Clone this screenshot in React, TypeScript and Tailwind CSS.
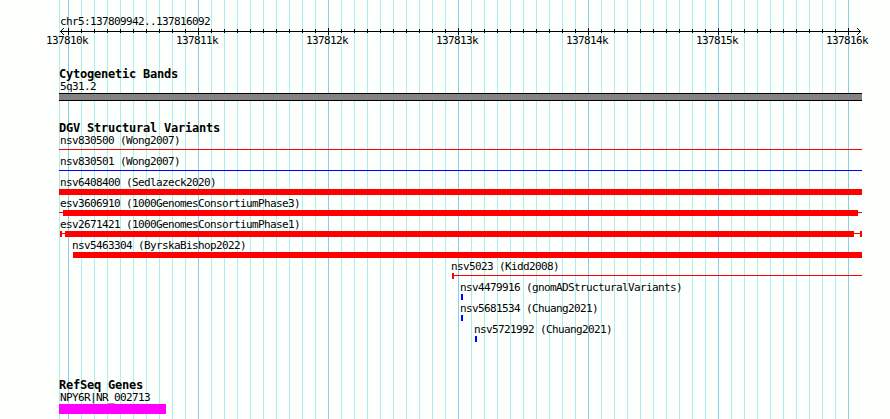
import type { ReactNode } from 'react';

const MAJORS = [68, 198, 328, 458, 588, 718, 848];
const TICKS = Array.from({ length: 61 }, (_, i) => 68 + i * 13);

function Grid() {
  return (
    <svg className="absolute inset-0" width="890" height="419" shapeRendering="crispEdges">
      <rect x="59" y="0" width="1" height="419" fill="#afeeee" />
      {TICKS.map((x) => (
        <rect key={x} x={x} y="0" width="1" height="419" fill={MAJORS.includes(x) ? '#87ceeb' : '#afeeee'} />
      ))}
    </svg>
  );
}

function Axis() {
  return (
    <svg className="-ml-[59px] block" width="890" height="8" shapeRendering="crispEdges">
      <rect x="60" y="3" width="801" height="1" />
      {TICKS.map((x) => {
        const major = MAJORS.includes(x);
        return <rect key={x} x={x} y={major ? 0 : 1} width="1" height={major ? 7 : 4} />;
      })}
      {[1, 2, 3].map((d) => (
        <g key={d}>
          <rect x={60 + d} y={3 - d} width="1" height="1" />
          <rect x={60 + d} y={3 + d} width="1" height="1" />
          <rect x={860 - d} y={3 - d} width="1" height="1" />
          <rect x={860 - d} y={3 + d} width="1" height="1" />
        </g>
      ))}
    </svg>
  );
}

const Heading = ({ children }: { children: ReactNode }) => (
  <h2 className="h-[13px] text-[12px] leading-[13px] font-bold tracking-[-0.224px]">{children}</h2>
);

const Label = ({ children }: { children: ReactNode }) => (
  <div className="h-[13px] pl-px leading-[13px]">{children}</div>
);

const Red = ({ w }: { w: string }) => <span className={`h-[6px] bg-[#ff0000] ${w}`} />;
const Blue = () => <span className="h-[6px] w-[2px] bg-[#0000ff]" />;
const Thin = ({ w, color = 'bg-[#ff0000]' }: { w: string; color?: string }) => (
  <span className={`mt-[2px] h-px ${w} ${color}`} />
);

function Feature({ name, indent = '', children }: { name: string; indent?: string; children: ReactNode }) {
  return (
    <div className={`h-[21px] ${indent}`}>
      <Label>{name}</Label>
      <div className="flex h-[6px] items-start">{children}</div>
    </div>
  );
}

export default function App() {
  return (
    <main className="relative h-[419px] w-[890px] overflow-hidden bg-[#fdfffc] font-['DejaVu_Sans_Mono','Liberation_Mono',monospace] text-[11px] tracking-[-0.622px] whitespace-pre text-black">
      <Grid />
      <div className="relative ml-[59px] pt-[15px]">
        <Label>chr5:137809942..137816092</Label>
        <Axis />
        <div className="-mt-[2px] -ml-[13px] flex h-[13px] leading-[13px]">
          {MAJORS.map((x, i) => (
            <span key={x} className="w-[130px] shrink-0">{`13781${i}k`}</span>
          ))}
        </div>

        <section className="mt-[21px]">
          <Heading>Cytogenetic Bands</Heading>
          <div className="-mt-px"><Label>5q31.2</Label></div>
          <div className="h-[8px] w-[803px] border-y border-black bg-[#848284]" />
        </section>

        <section className="mt-[21px]">
          <Heading>DGV Structural Variants</Heading>
          <div className="-mt-px">
            <Feature name="nsv830500 (Wong2007)"><Thin w="w-[803px]" /></Feature>
            <Feature name="nsv830501 (Wong2007)"><Thin w="w-[803px]" color="bg-[#0000ff]" /></Feature>
            <Feature name="nsv6408400 (Sedlazeck2020)"><Red w="w-[803px]" /></Feature>
            <Feature name="esv3606910 (1000GenomesConsortiumPhase3)">
              <Thin w="w-[4px]" /><Red w="w-[795px]" /><Thin w="w-[4px]" />
            </Feature>
            <Feature name="esv2671421 (1000GenomesConsortiumPhase1)">
              <span className="w-px" /><Red w="w-[2px]" /><Thin w="w-[3px]" /><Red w="w-[789px]" /><Thin w="w-[6px]" /><Red w="w-[2px]" />
            </Feature>
            <Feature name="nsv5463304 (ByrskaBishop2022)" indent="ml-[12px]">
              <span className="w-[2px]" /><Red w="w-[789px]" />
            </Feature>
            <Feature name="nsv5023 (Kidd2008)" indent="ml-[391px]">
              <span className="w-[2px]" /><Red w="w-[2px]" /><Thin w="w-[408px]" />
            </Feature>
            <Feature name="nsv4479916 (gnomADStructuralVariants)" indent="ml-[400px]">
              <span className="w-[2px]" /><Blue />
            </Feature>
            <Feature name="nsv5681534 (Chuang2021)" indent="ml-[400px]">
              <span className="w-[2px]" /><Blue />
            </Feature>
            <Feature name="nsv5721992 (Chuang2021)" indent="ml-[414px]">
              <span className="w-[2px]" /><Blue />
            </Feature>
          </div>
        </section>

        <section className="mt-[35px]">
          <Heading>RefSeq Genes</Heading>
          <div className="-mt-px"><Label>NPY6R|NR_002713</Label></div>
          <div className="h-[10px] w-[107px] bg-[#ff00ff]" />
        </section>
      </div>
    </main>
  );
}
